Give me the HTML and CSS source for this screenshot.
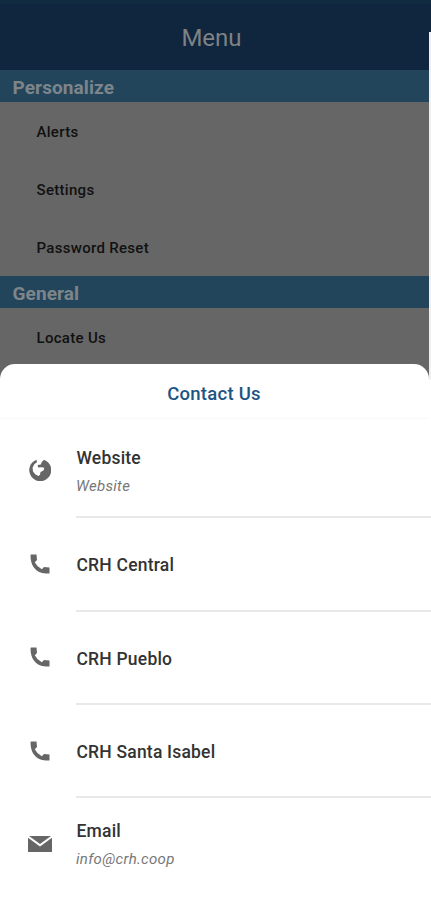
FILE: index.html
```
<!DOCTYPE html>
<html lang="en">
<head>
    <meta charset="UTF-8">
    <meta name="viewport" content="width=device-width, initial-scale=1.0">
    <title>Menu</title>
    <link rel="stylesheet" href="styles.css">
</head>
<body>
    <div class="screen">
        <header class="top-bar">
            <h1>Menu</h1>
        </header>
        <h2 class="section">Personalize</h2>
        <ul class="menu">
            <li>Alerts</li>
            <li>Settings</li>
            <li>Password Reset</li>
        </ul>
        <h2 class="section">General</h2>
        <ul class="menu">
            <li>Locate Us</li>
        </ul>
    </div>
    <div class="edge"></div>

    <div class="sheet">
        <h3 class="sheet-title">Contact Us</h3>
        <div class="contact">
            <svg class="icon globe" viewBox="0 0 22 22">
                <path d="M7.5 .8L8 3.2L5.5 5L3.6 8.5L4 12.5L6.5 15.5L9.5 17L11 15.8L11.5 13L14.5 11.5L15.3 8.8L12.5 8.3L9 8.5L8.8 6L11.8 5.5L12.8 3L15 .8A11 11 0 1 1 7.5 .8Z"/>
            </svg>
            <div class="info">
                <div class="name">Website</div>
                <div class="detail">Website</div>
            </div>
        </div>
        <div class="contact">
            <svg class="icon phone" viewBox="0 0 20 20">
                <path d="M1 .5H6.5L7 6L4.8 8.2Q7 12.8 11.8 15.2L14 13L19.5 13.5V19.5H16Q7.5 19 3.5 13Q.5 8.5 .5 1Z"/>
            </svg>
            <div class="info">
                <div class="name">CRH Central</div>
            </div>
        </div>
        <div class="contact">
            <svg class="icon phone" viewBox="0 0 20 20">
                <path d="M1 .5H6.5L7 6L4.8 8.2Q7 12.8 11.8 15.2L14 13L19.5 13.5V19.5H16Q7.5 19 3.5 13Q.5 8.5 .5 1Z"/>
            </svg>
            <div class="info">
                <div class="name">CRH Pueblo</div>
            </div>
        </div>
        <div class="contact">
            <svg class="icon phone" viewBox="0 0 20 20">
                <path d="M1 .5H6.5L7 6L4.8 8.2Q7 12.8 11.8 15.2L14 13L19.5 13.5V19.5H16Q7.5 19 3.5 13Q.5 8.5 .5 1Z"/>
            </svg>
            <div class="info">
                <div class="name">CRH Santa Isabel</div>
            </div>
        </div>
        <div class="contact">
            <svg class="icon mail" viewBox="0 0 24 16">
                <path d="M1 0H23L12 8Z"/>
                <path d="M0 1.8L12 10.5L24 1.8V16H0Z"/>
            </svg>
            <div class="info">
                <div class="name">Email</div>
                <div class="detail">info@crh.coop</div>
            </div>
        </div>
    </div>
</body>
</html>
```

FILE: styles.css
```
* {
    box-sizing: border-box;
}
body {
    margin: 0;
    height: 900px;
    overflow: hidden;
    position: relative;
    background-color: white;
    font-family: Roboto, sans-serif;
}
h1, h2, h3, ul {
    margin: 0;
    padding: 0;
}
.screen {
    height: 380px;
    background-color: #666666;
}
.top-bar {
    height: 70px;
    padding-top: 6px;
    display: flex;
    align-items: center;
    justify-content: center;
    background: linear-gradient(#102b40 0, #102b40 3px, #10253e 6px);
}
.top-bar h1 {
    margin-right: 8px;
    font-size: 24px;
    font-weight: 400;
    color: #7e8284;
}
.section {
    height: 32px;
    line-height: 35px;
    padding-left: 12.5px;
    background-color: #22455c;
    color: #7d858a;
    font-size: 19px;
    letter-spacing: 0.1px;
    font-weight: 700;
}
.menu {
    list-style: none;
}
.menu li {
    height: 58px;
    line-height: 61px;
    padding-left: 36.5px;
    font-size: 15px;
    font-weight: 500;
    letter-spacing: 0.3px;
    color: #111111;
}
/* light strip to the right of the dimmed screen */
.edge {
    position: absolute;
    top: 32px;
    right: 0;
    width: 2px;
    height: 348px;
    background-color: #f0f0f0;
}
.sheet {
    position: absolute;
    top: 364px;
    left: 0;
    width: 429px;
    height: 536px;
    background-color: white;
    border-radius: 15px 15px 0 0;
}
.sheet-title {
    height: 55px;
    margin-bottom: 6px;
    padding-right: 1px;
    line-height: 61px;
    text-align: center;
    font-size: 18.5px;
    letter-spacing: 0.25px;
    font-weight: 500;
    color: #1c5483;
    border-bottom: 1px solid #f8f8f8;
}
.contact {
    height: 93.3px;
    padding-left: 28px;
    display: flex;
    align-items: center;
}
.icon {
    width: 24px;
    height: 24px;
    margin-bottom: 2px;
    flex-shrink: 0;
    fill: #666666;
}
.globe {
    width: 22px;
    height: 22px;
    margin: 0 1px 3px;
}
.phone {
    width: 20px;
    height: 20px;
    margin: 0 2px 2px;
}
.mail {
    height: 16px;
}
.info {
    flex: 1;
    height: 100%;
    margin-left: 24px;
    margin-right: -2px;
    padding-top: 3px;
    display: flex;
    flex-direction: column;
    justify-content: center;
    border-bottom: 2px solid #e9e9e9;
}
.contact:last-child .info {
    border-bottom-color: transparent;
}
.name {
    line-height: 28px;
    padding-left: 0.5px;
    font-size: 17.5px;
    letter-spacing: 0.2px;
    font-weight: 500;
    color: #333333;
}
.detail {
    line-height: 28px;
    font-size: 15px;
    letter-spacing: 0.3px;
    font-style: italic;
    color: #777777;
}
```
